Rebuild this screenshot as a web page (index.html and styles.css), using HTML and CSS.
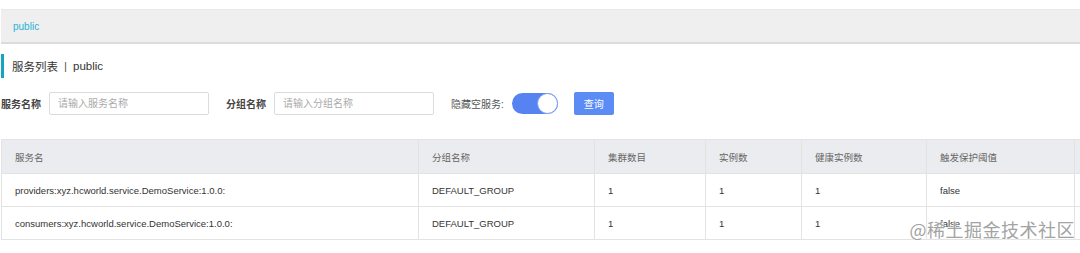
FILE: index.html
```html
<!DOCTYPE html>
<html lang="zh-CN">
<head>
    <meta charset="UTF-8">
    <title>服务列表</title>
    <link rel="stylesheet" href="styles.css">
</head>
<body>

<!-- Namespace tab bar -->
<div class="ns-bar">
    <span class="ns-item">public</span>
</div>

<!-- Page title -->
<div class="page-title">
    服务列表 <span class="sep">|</span> public
</div>

<!-- Search form -->
<div class="search-form">
    <label class="form-label">服务名称</label>
    <input class="form-input" type="text" placeholder="请输入服务名称">
    <label class="form-label">分组名称</label>
    <input class="form-input" type="text" placeholder="请输入分组名称">
    <label class="form-label light">隐藏空服务:</label>
    <span class="switch on"><span class="knob"></span></span>
    <button class="query-btn">查询</button>
</div>

<div class="table-wrap">
    <table class="service-table">
        <thead>
            <tr>
                <th class="c-name">服务名</th>
                <th class="c-group">分组名称</th>
                <th class="c-cluster">集群数目</th>
                <th class="c-inst">实例数</th>
                <th class="c-healthy">健康实例数</th>
                <th class="c-protect">触发保护阈值</th>
                <th class="c-op"></th>
            </tr>
        </thead>
        <tbody>
            <tr>
                <td>providers:xyz.hcworld.service.DemoService:1.0.0:</td>
                <td>DEFAULT_GROUP</td>
                <td>1</td>
                <td>1</td>
                <td>1</td>
                <td>false</td>
                <td></td>
            </tr>
            <tr>
                <td>consumers:xyz.hcworld.service.DemoService:1.0.0:</td>
                <td>DEFAULT_GROUP</td>
                <td>1</td>
                <td>1</td>
                <td>1</td>
                <td>false</td>
                <td></td>
            </tr>
        </tbody>
    </table>
    <div class="watermark">@稀土掘金技术社区</div>
</div>

</body>
</html>
```

FILE: styles.css
```css
/* Base */
body {
    margin: 0;
    padding: 0 0 0 1px;
    background: #fff;
    color: #333;
    font-family: "Liberation Sans", "Noto Sans CJK SC", sans-serif;
    font-size: 10px;
    overflow: hidden;
}

/* Namespace bar */
.ns-bar {
    margin-top: 9px;
    height: 32px;
    background-color: #efefef;
    border-top: 1px solid #e8e8e8;
    border-bottom: 2px solid #dcdcdc;
    display: flex;
    align-items: center;
    padding-left: 12px;
}

.ns-item {
    color: #2bb1d6;
    font-size: 10px;
}

/* Title */
.page-title {
    margin-top: 10px;
    height: 24px;
    border-left: 3px solid #17a2c0;
    padding-left: 8px;
    display: flex;
    align-items: center;
    font-size: 11.5px;
    color: #333;
}

.page-title .sep {
    margin: 0 6px;
    color: #555;
}

/* Search form */
.search-form {
    margin-top: 14px;
    display: flex;
    align-items: center;
    height: 23px;
}

.form-label {
    font-size: 10px;
    font-weight: bold;
    color: #444;
    margin-right: 8px;
}

.form-label.light {
    font-weight: normal;
    color: #555;
}

.form-input {
    box-sizing: border-box;
    width: 160px;
    height: 23px;
    border: 1px solid #dcdcdc;
    border-radius: 2px;
    padding: 0 8px;
    font-size: 10px;
    font-family: inherit;
    margin-right: 17px;
    outline: none;
}

.form-input::placeholder {
    color: #aaa;
}

.switch {
    box-sizing: border-box;
    width: 46px;
    height: 21px;
    border-radius: 11px;
    background-color: #5683f1;
    position: relative;
    display: inline-block;
    margin-right: 16px;
}

.switch .knob {
    position: absolute;
    top: 0;
    right: 0;
    box-sizing: border-box;
    width: 21px;
    height: 21px;
    border-radius: 50%;
    background-color: #fff;
    border: 1px solid #7d9ef3;
}

.query-btn {
    width: 40px;
    height: 23px;
    border: none;
    border-radius: 2px;
    background-color: #5b8cf5;
    color: #fff;
    font-size: 10px;
    font-family: inherit;
    padding: 0;
}

/* Table */
.table-wrap {
    margin-top: 24px;
    position: relative;
}

.service-table {
    border-collapse: collapse;
    table-layout: fixed;
    width: 1100px;
}

.service-table th,
.service-table td {
    text-align: left;
    padding: 0 13px;
    border: 1px solid #e3e3e3;
    font-size: 9.5px;
    white-space: nowrap;
}

.service-table th {
    height: 33px;
    background-color: #ebecef;
    color: #666;
    font-weight: normal;
}

.service-table td {
    height: 32px;
    color: #333;
}

.c-name { width: 390px; }
.c-group { width: 149px; }
.c-cluster { width: 84px; }
.c-inst { width: 69px; }
.c-healthy { width: 98px; }
.c-protect { width: 121px; }
.c-op { width: 60px; }

/* Watermark overlay */
.watermark {
    position: absolute;
    right: 5px;
    bottom: -2px;
    font-family: "Noto Sans CJK SC", sans-serif;
    font-size: 18px;
    color: #a3a3a3;
    text-shadow: 0 0 2px #fff, 0 0 2px #fff;
    letter-spacing: 0.5px;
}
```
